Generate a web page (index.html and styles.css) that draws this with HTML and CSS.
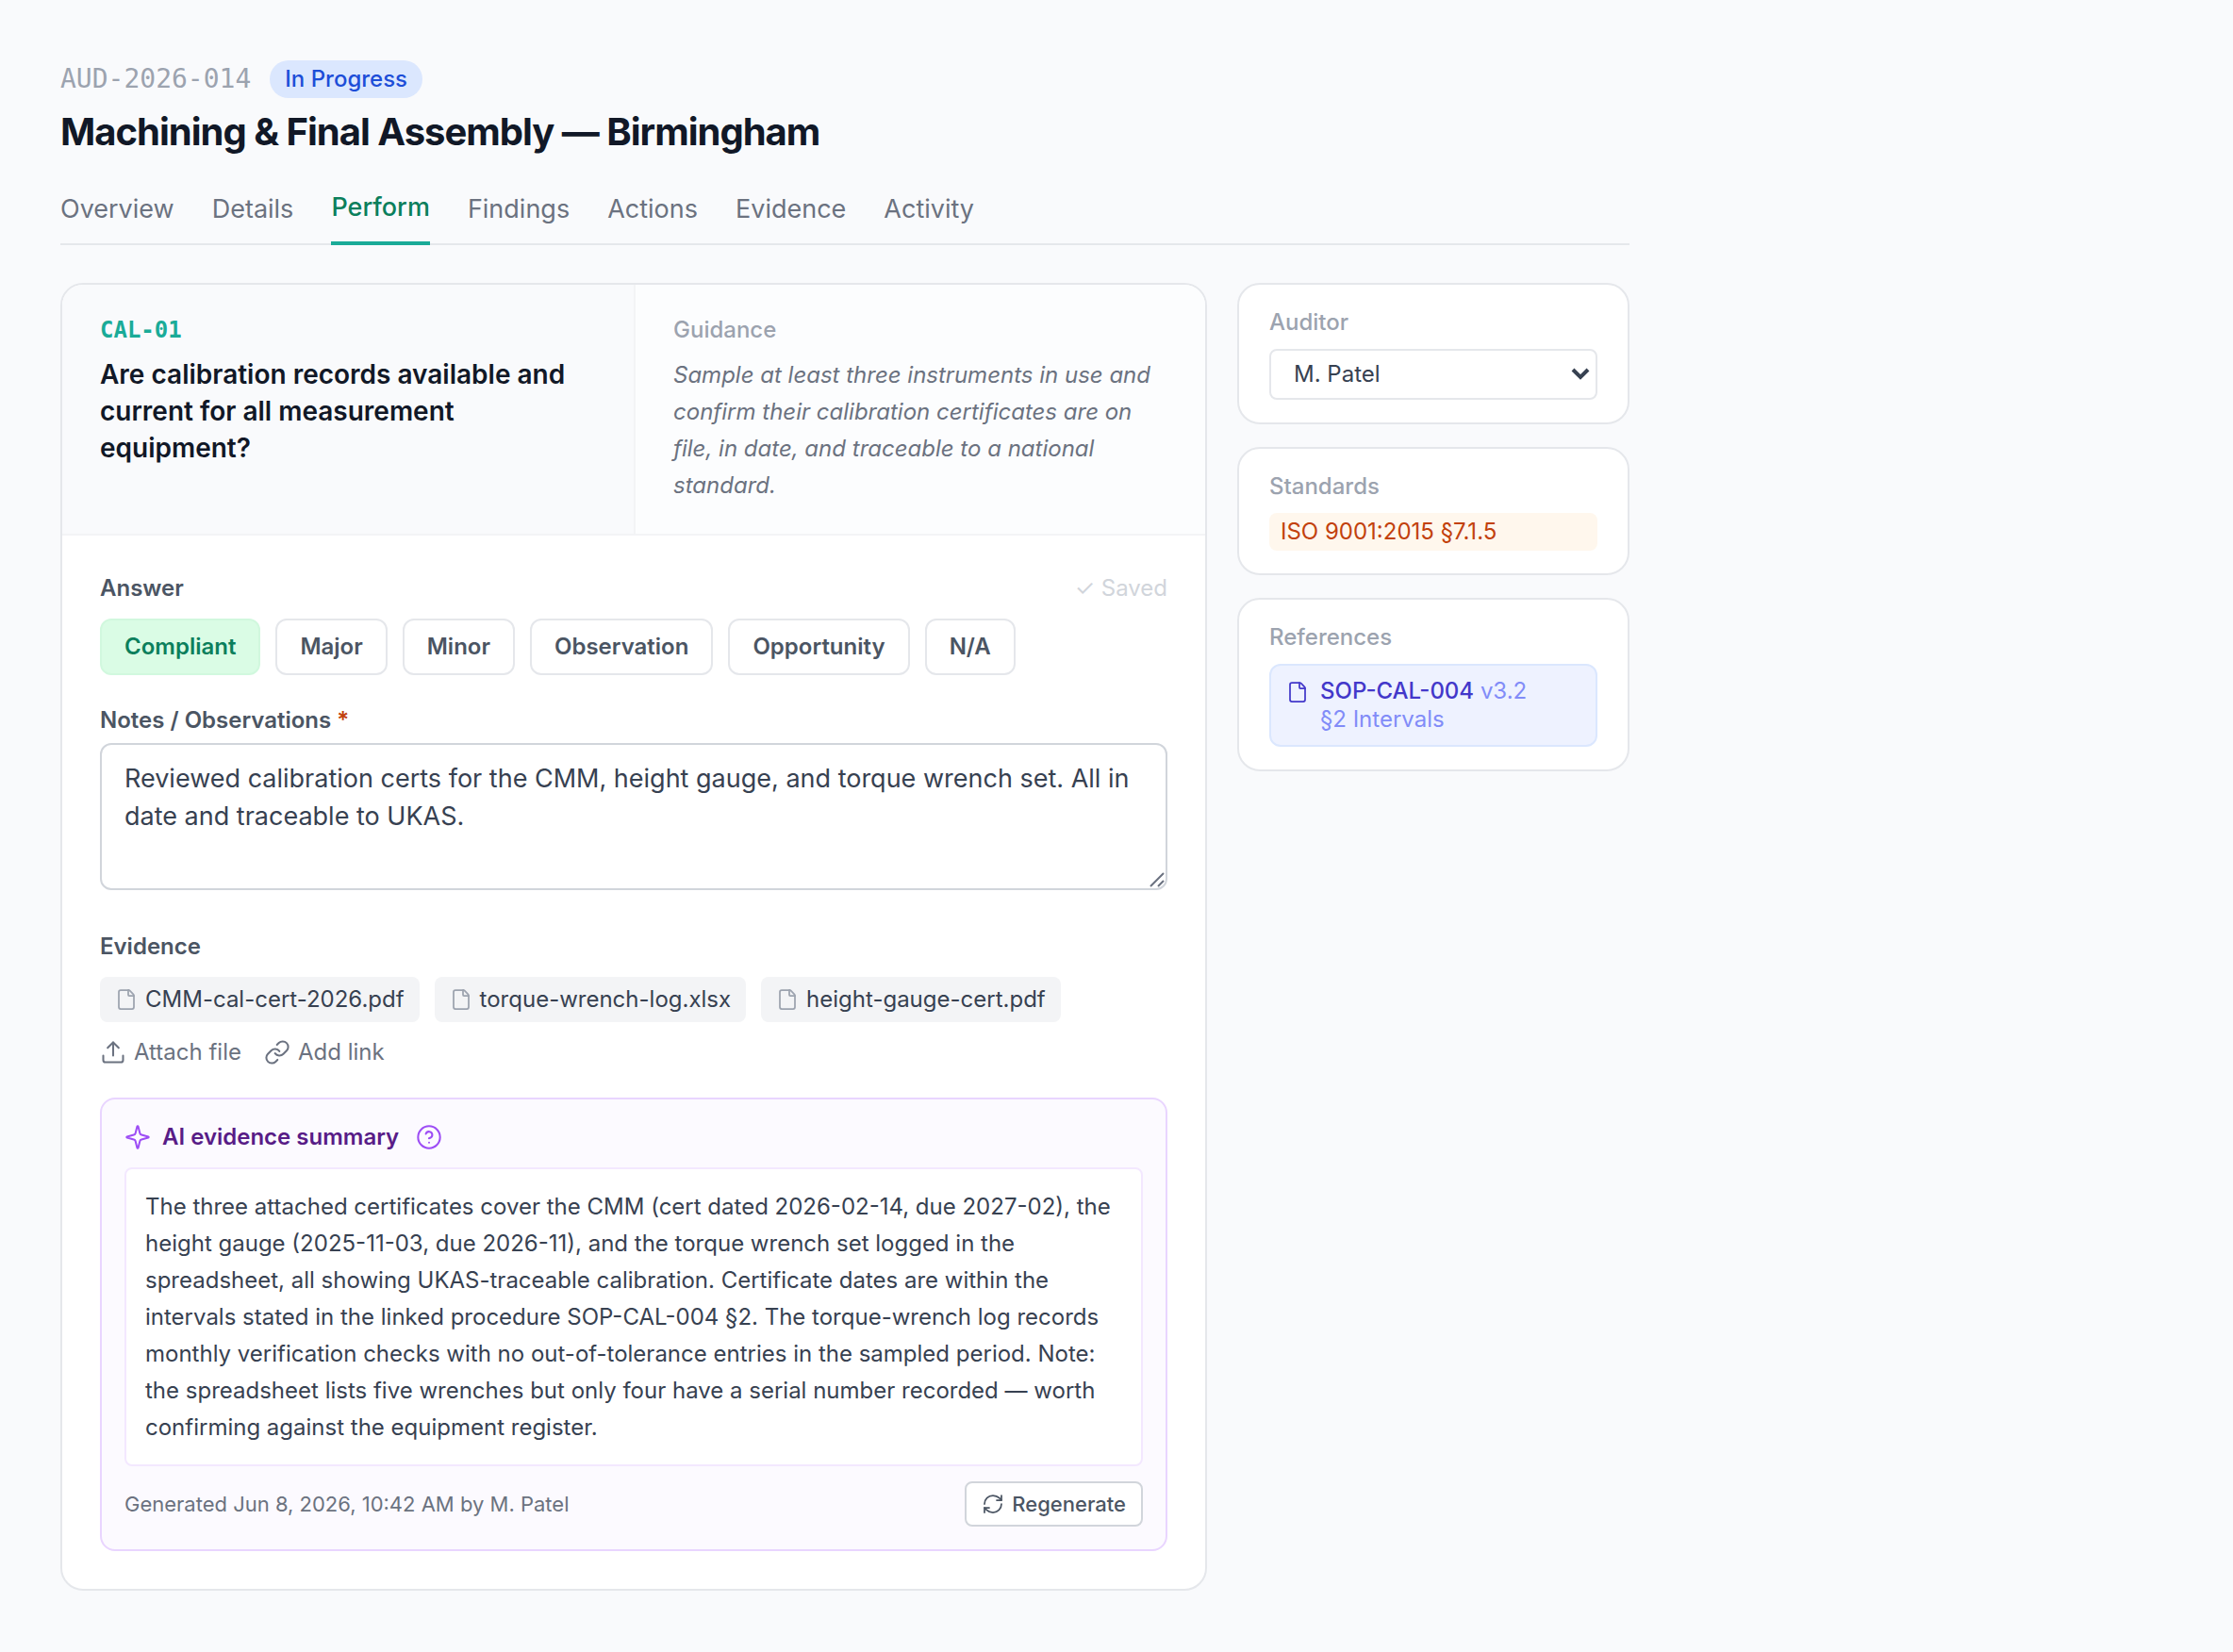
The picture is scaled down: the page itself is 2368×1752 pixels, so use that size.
FILE: index.html
```html
<!DOCTYPE html>
<html lang="en">
<head>
  <meta charset="UTF-8" />
  <meta name="viewport" content="width=device-width, initial-scale=1.0" />
  <title>AUD-2026-014 - Perform</title>
  <link rel="stylesheet" href="styles.css">
</head>
<body>
  <svg class="sprite" aria-hidden="true">
    <symbol id="icon-file" viewBox="0 0 24 24">
      <path d="M6 22a2 2 0 0 1-2-2V4a2 2 0 0 1 2-2h8a2.4 2.4 0 0 1 1.704.706l3.588 3.588A2.4 2.4 0 0 1 20 8v12a2 2 0 0 1-2 2z" />
      <path d="M14 2v5a1 1 0 0 0 1 1h5" />
    </symbol>
    <symbol id="icon-upload" viewBox="0 0 24 24">
      <path d="M21 15v4a2 2 0 0 1-2 2H5a2 2 0 0 1-2-2v-4" />
      <path d="M17 8l-5-5-5 5" />
      <path d="M12 3v12" />
    </symbol>
    <symbol id="icon-link" viewBox="0 0 24 24">
      <path d="M10 13a5 5 0 0 0 7.54.54l3-3a5 5 0 0 0-7.07-7.07l-1.72 1.71" />
      <path d="M14 11a5 5 0 0 0-7.54-.54l-3 3a5 5 0 0 0 7.07 7.07l1.71-1.71" />
    </symbol>
    <symbol id="icon-sparkle" viewBox="0 0 24 24">
      <path d="M9.937 15.5A2 2 0 0 0 8.5 14.063l-6.135-1.582a.5.5 0 0 1 0-.962L8.5 9.936A2 2 0 0 0 9.937 8.5l1.582-6.135a.5.5 0 0 1 .963 0L14.063 8.5A2 2 0 0 0 15.5 9.937l6.135 1.581a.5.5 0 0 1 0 .964L15.5 14.063a2 2 0 0 0-1.437 1.437l-1.582 6.135a.5.5 0 0 1-.963 0z" />
    </symbol>
    <symbol id="icon-help" viewBox="0 0 24 24">
      <circle cx="12" cy="12" r="10" />
      <path d="M9.09 9a3 3 0 0 1 5.83 1c0 2-3 3-3 3" />
      <path d="M12 17h.01" />
    </symbol>
    <symbol id="icon-refresh" viewBox="0 0 24 24">
      <path d="M3 12a9 9 0 0 1 9-9 9.75 9.75 0 0 1 6.74 2.74L21 8" />
      <path d="M21 3v5h-5" />
      <path d="M21 12a9 9 0 0 1-9 9 9.75 9.75 0 0 1-6.74-2.74L3 16" />
      <path d="M8 16H3v5" />
    </symbol>
  </svg>

  <div class="page">
    <header>
      <div class="audit-meta">
        <span class="audit-id">AUD-2026-014</span>
        <span class="status">In Progress</span>
      </div>
      <h1>Machining &amp; Final Assembly — Birmingham</h1>
      <nav class="tabs">
        <a href="#overview">Overview</a>
        <a href="#details">Details</a>
        <a href="#perform" class="active" aria-current="page">Perform</a>
        <a href="#findings">Findings</a>
        <a href="#actions">Actions</a>
        <a href="#evidence">Evidence</a>
        <a href="#activity">Activity</a>
      </nav>
    </header>

    <div class="layout">
      <main class="card question-card">
        <div class="question-head">
          <div class="question">
            <div class="question-id">CAL-01</div>
            <h2>Are calibration records available and current for all measurement equipment?</h2>
          </div>
          <div class="guidance">
            <h3 class="side-label">Guidance</h3>
            <p>Sample at least three instruments in use and confirm their calibration certificates are on file, in date, and traceable to a national standard.</p>
          </div>
        </div>

        <div class="question-body">
          <section class="field">
            <div class="field-head">
              <h3 class="label">Answer</h3>
              <span class="saved">✓ Saved</span>
            </div>
            <div class="answers">
              <button type="button" class="answer selected" aria-pressed="true">Compliant</button>
              <button type="button" class="answer">Major</button>
              <button type="button" class="answer">Minor</button>
              <button type="button" class="answer">Observation</button>
              <button type="button" class="answer">Opportunity</button>
              <button type="button" class="answer">N/A</button>
            </div>
          </section>

          <section class="field notes">
            <label class="label" for="notes">Notes / Observations <span class="required">*</span></label>
            <div class="notes-box">
              <textarea id="notes" rows="3">Reviewed calibration certs for the CMM, height gauge, and torque wrench set. All in date and traceable to UKAS.</textarea>
              <svg class="grip" viewBox="0 0 16 16" aria-hidden="true"><path d="M1 15L15 1M9 15l6-6" /></svg>
            </div>
          </section>

          <section class="field evidence">
            <h3 class="label">Evidence</h3>
            <div class="files">
              <a href="#" class="file"><svg class="icon"><use href="#icon-file" /></svg>CMM-cal-cert-2026.pdf</a>
              <a href="#" class="file"><svg class="icon"><use href="#icon-file" /></svg>torque-wrench-log.xlsx</a>
              <a href="#" class="file"><svg class="icon"><use href="#icon-file" /></svg>height-gauge-cert.pdf</a>
            </div>
            <div class="file-actions">
              <button type="button"><svg class="icon icon-lg"><use href="#icon-upload" /></svg>Attach file</button>
              <button type="button"><svg class="icon icon-lg"><use href="#icon-link" /></svg>Add link</button>
            </div>
          </section>

          <section class="ai">
            <div class="ai-head">
              <svg class="icon icon-lg"><use href="#icon-sparkle" /></svg>
              <h3>AI evidence summary</h3>
              <button type="button" class="help" aria-label="About this summary"><svg class="icon icon-lg"><use href="#icon-help" /></svg></button>
            </div>
            <p class="ai-text">The three attached certificates cover the CMM (cert dated 2026-02-14, due 2027-02), the height gauge (2025-11-03, due 2026-11), and the torque wrench set logged in the spreadsheet, all showing UKAS-traceable calibration. Certificate dates are within the intervals stated in the linked procedure SOP-CAL-004 §2. The torque-wrench log records monthly verification checks with no out-of-tolerance entries in the sampled period. Note: the spreadsheet lists five wrenches but only four have a serial number recorded — worth confirming against the equipment register.</p>
            <div class="ai-foot">
              <span>Generated Jun 8, 2026, 10:42 AM by M. Patel</span>
              <button type="button" class="regenerate"><svg class="icon"><use href="#icon-refresh" /></svg>Regenerate</button>
            </div>
          </section>
        </div>
      </main>

      <aside>
        <section class="card side-card">
          <label class="side-label" for="auditor">Auditor</label>
          <div class="select-box">
            <select id="auditor">
              <option>M. Patel</option>
            </select>
            <svg class="chevron" viewBox="0 0 20 13" aria-hidden="true"><path d="M2 2l8 8 8-8" /></svg>
          </div>
        </section>
        <section class="card side-card">
          <h3 class="side-label">Standards</h3>
          <div class="standard">ISO 9001:2015 §7.1.5</div>
        </section>
        <section class="card side-card">
          <h3 class="side-label">References</h3>
          <a href="#" class="reference">
            <svg class="icon"><use href="#icon-file" /></svg>
            <span><strong>SOP-CAL-004</strong> v3.2<br>§2 Intervals</span>
          </a>
        </section>
      </aside>
    </div>
  </div>
</body>
</html>
```

FILE: styles.css
```css
:root {
  --bg: #f9fafc;
  --white: #ffffff;
  --ink: #111827;
  --text: #374151;
  --text-label: #4b5563;
  --text-muted: #6b7280;
  --text-faint: #9ca3af;
  --line: #e5e7eb;
  --line-soft: #f3f4f6;
  --line-strong: #d1d5db;
  --teal: #1aab98;
}
*, *::before, *::after { box-sizing: border-box; }
body {
  margin: 0;
  font-family: Inter, 'Liberation Sans', sans-serif;
  font-size: 24px;
  line-height: 32px;
  background: var(--bg);
  color: var(--text);
}
h1, h2, h3, p { margin: 0; }
h3 { font-size: 24px; }
a { color: inherit; text-decoration: none; }
button, select, textarea { font: inherit; color: inherit; }
button { cursor: pointer; }

.sprite { display: none; }
.icon {
  flex: none;
  width: 24px; height: 24px;
  fill: none; stroke: currentColor; stroke-width: 1.75;
  stroke-linecap: round; stroke-linejoin: round;
}
.icon-lg { width: 28px; height: 28px; }

.page { max-width: 1792px; padding: 64px; }

/* header */
.audit-meta { display: flex; align-items: center; gap: 20px; }
.audit-id {
  font-family: 'DejaVu Sans Mono', monospace;
  font-size: 28px; line-height: 40px;
  color: var(--text-faint);
}
.status {
  padding: 4px 16px; border-radius: 999px;
  font-weight: 500;
  background: #dbe7fe; color: #1d4ed8;
}
h1 {
  margin-top: 8px;
  font-size: 40px; line-height: 56px; font-weight: 700;
  letter-spacing: -0.025em;
  color: var(--ink);
}
.tabs {
  display: flex; align-items: flex-end; gap: 40px;
  margin-top: 32px;
  border-bottom: 2px solid var(--line);
  font-size: 27px; line-height: 40px;
  color: var(--text-muted);
}
.tabs a { padding-bottom: 16px; }
.tabs .active {
  margin-bottom: -2px;
  border-bottom: 4px solid var(--teal);
  font-weight: 500;
  color: #0b7f5c;
}

/* layout */
.layout {
  display: grid; grid-template-columns: minmax(0, 1fr) 416px;
  gap: 32px; align-items: start;
  margin-top: 40px;
}
.card {
  background: var(--white);
  border: 2px solid var(--line); border-radius: 24px;
  overflow: hidden;
}
.label { display: block; font-weight: 600; color: var(--text-label); }
.side-label { display: block; font-weight: 500; color: var(--text-faint); }

/* question */
.question-head {
  display: grid; grid-template-columns: 1fr 1fr;
  border-bottom: 2px solid var(--line-soft);
}
.question, .guidance { padding: 32px 40px; }
.question { background: var(--bg); }
.question-id {
  font-family: 'DejaVu Sans Mono', monospace; font-weight: 700;
  color: var(--teal);
}
.question h2 {
  margin-top: 12px;
  font-size: 28px; line-height: 39px; font-weight: 600;
  color: var(--ink);
}
.guidance { border-left: 2px solid var(--line-soft); background: #fcfdfe; }
.guidance p {
  margin-top: 12px;
  line-height: 39px; font-style: italic;
  color: var(--text-muted);
}
.question-body { padding: 40px; }

/* answer */
.field-head { display: flex; justify-content: space-between; }
.saved { color: var(--line-strong); }
.answers { display: flex; flex-wrap: wrap; gap: 16px; margin-top: 16px; }
.answer {
  padding: 12px 24px;
  border: 2px solid var(--line); border-radius: 12px;
  font-weight: 600;
  background: var(--white); color: var(--text-label);
}
.answer.selected { background: #dafce5; border-color: #d1f8de; color: #0b7f5c; }

/* notes */
.notes { margin-top: 32px; }
.required { color: #c2410c; }
.notes-box { position: relative; margin-top: 8px; }
.notes-box textarea {
  display: block; width: 100%;
  padding: 16px 24px;
  border: 2px solid var(--line-strong); border-radius: 12px;
  font-size: 27px; line-height: 40px;
  background: var(--white);
  resize: none;
}
.grip {
  position: absolute; right: 3px; bottom: 3px;
  width: 16px; height: 16px;
  fill: none; stroke: var(--text-muted); stroke-width: 2;
  pointer-events: none;
}

/* evidence */
.evidence { margin-top: 44px; }
.files { display: flex; flex-wrap: wrap; gap: 16px; margin-top: 16px; }
.file {
  display: flex; align-items: center; gap: 8px;
  padding: 8px 16px; border-radius: 8px;
  background: var(--line-soft);
}
.file .icon { color: var(--text-faint); }
.file-actions { display: flex; gap: 24px; margin-top: 16px; }
.file-actions button {
  display: flex; align-items: center; gap: 8px;
  padding: 0; border: none;
  background: none; color: var(--text-muted);
}

/* ai summary */
.ai {
  margin-top: 32px; padding: 24px;
  border: 2px solid #e9d5ff; border-radius: 16px;
  background: #fcfaff;
}
.ai-head { display: flex; align-items: center; gap: 12px; color: #9d4df5; }
.ai-head h3 { font-weight: 600; color: #581c87; }
.help {
  display: flex; margin-left: 6px; padding: 0;
  border: none; background: none; color: inherit;
}
.ai-text {
  margin-top: 16px; padding: 20px;
  border: 2px solid #f3e8ff; border-radius: 8px;
  line-height: 39px;
  background: var(--white);
}
.ai-foot {
  display: flex; justify-content: space-between; align-items: center;
  margin-top: 16px;
  font-size: 22px;
  color: var(--text-muted);
}
.regenerate {
  display: flex; align-items: center; gap: 8px;
  padding: 6px 16px;
  border: 2px solid var(--line-strong); border-radius: 8px;
  font-weight: 500;
  background: var(--white); color: var(--text-label);
}

/* sidebar */
aside { display: grid; gap: 24px; }
.side-card { padding: 24px 32px; }
.select-box { position: relative; margin-top: 12px; }
.select-box select {
  display: block; width: 100%; height: 54px;
  padding: 0 24px;
  border: 2px solid var(--line); border-radius: 8px;
  background: var(--white);
  appearance: none;
}
.chevron {
  position: absolute; right: 8px; top: 20px;
  width: 20px; height: 13px;
  fill: none; stroke: var(--text); stroke-width: 4;
  pointer-events: none;
}
.standard {
  margin-top: 12px; padding: 4px 12px; border-radius: 8px;
  background: #fff7ed; color: #c2410c;
}
.reference {
  display: flex; gap: 12px;
  margin-top: 12px; padding: 12px 16px;
  border: 2px solid #dbe7fe; border-radius: 12px;
  line-height: 30px;
  background: #eef2ff; color: #818cf8;
}
.reference .icon { margin-top: 4px; color: #4338ca; }
.reference strong { font-weight: 500; color: #4338ca; }
```
